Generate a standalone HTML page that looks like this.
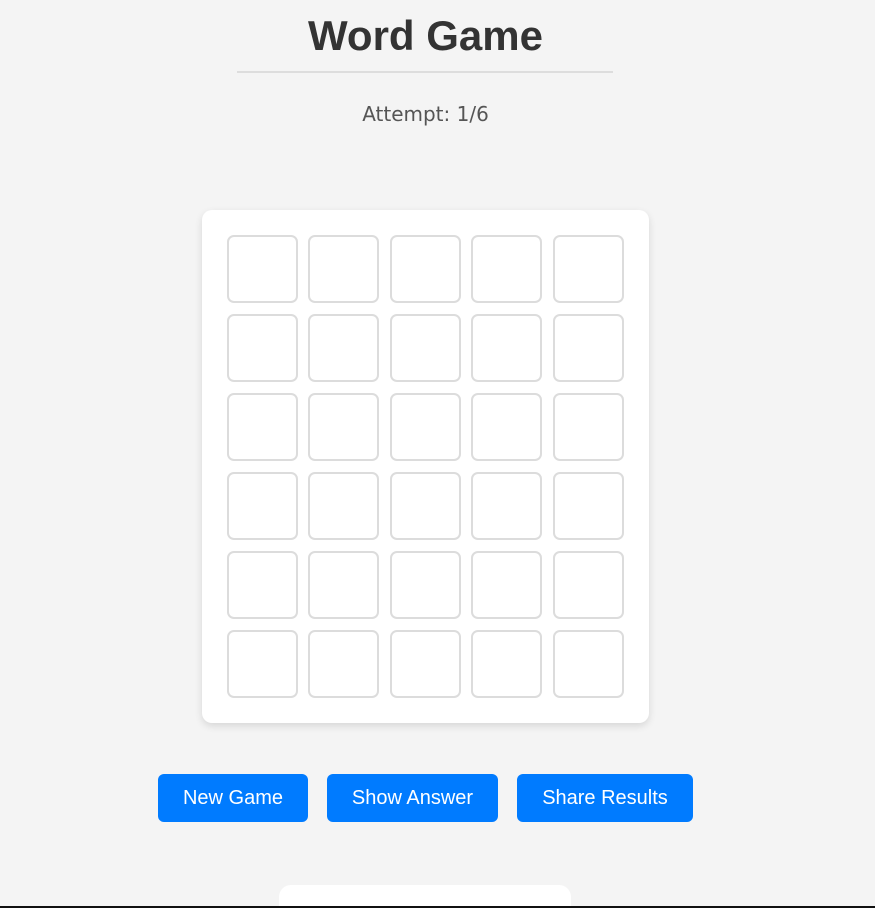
<!DOCTYPE html>
<html style="overflow:hidden;height:908px"><head><style>
body{margin:0;width:875px;height:908px;background:#f4f4f4;font-family:"Liberation Sans",sans-serif;position:relative;overflow:hidden}
h1{position:absolute;left:0;width:851px;top:12px;margin:0;text-align:center;font-size:42px;font-weight:bold;color:#333;font-family:"Liberation Sans",sans-serif}
.hr{position:absolute;left:237px;top:71px;width:376px;height:2px;background:#ddd}
.att{position:absolute;left:0;width:851px;top:102px;text-align:center;font-size:20px;color:#555;font-family:"DejaVu Sans",sans-serif}
.card{position:absolute;left:202px;top:210px;width:447px;height:513px;background:#fff;border-radius:10px;box-shadow:0 3px 8px rgba(0,0,0,.12)}
.t{position:absolute;width:67px;height:64px;border:2px solid #dcdcdc;border-radius:7px;box-sizing:content-box}
.b{position:absolute;top:774px;height:48px;background:#007bff;color:#fff;border-radius:6px;font-size:20px;display:flex;align-items:center;justify-content:center}
.bot{position:absolute;left:279px;top:885px;width:292px;height:21px;background:#fff;border-radius:12px 12px 0 0}
.line{position:absolute;left:0;top:906px;width:875px;height:2px;background:#111}
</style></head><body>
<h1>Word Game</h1>
<div class="hr"></div>
<div class="att">Attempt: 1/6</div>
<div class="card"></div>
<div id="g"></div>
<div class="b" style="left:158px;width:150px">New Game</div>
<div class="b" style="left:327px;width:171px">Show Answer</div>
<div class="b" style="left:517px;width:176px">Share Results</div>
<div class="bot"></div>
<div class="line"></div>
<script>
var xs=[227,308,390,471,553],h='';
for(var r=0;r<6;r++)for(var c=0;c<5;c++)h+='<div class="t" style="left:'+xs[c]+'px;top:'+(235+r*79)+'px"></div>';
document.getElementById('g').innerHTML=h;
</script>
</body></html>
